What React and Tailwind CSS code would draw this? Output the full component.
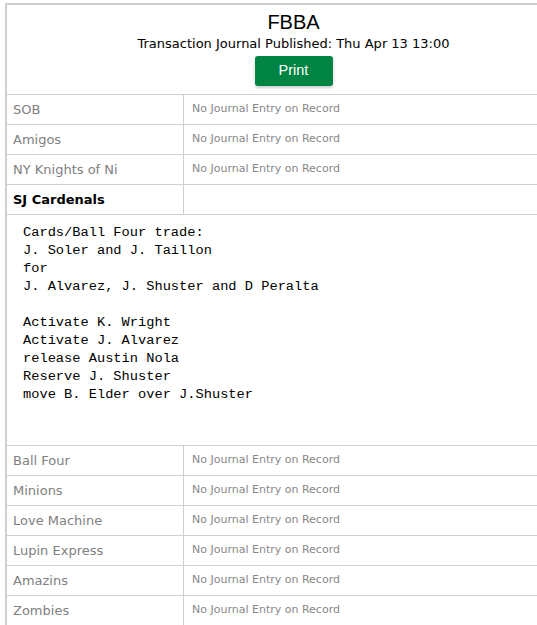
import React from "react";

const before = ["SOB", "Amigos", "NY Knights of Ni"];
const after = ["Ball Four", "Minions", "Love Machine", "Lupin Express", "Amazins", "Zombies"];

const journal = `Cards/Ball Four trade:
J. Soler and J. Taillon
for
J. Alvarez, J. Shuster and D Peralta

Activate K. Wright
Activate J. Alvarez
release Austin Nola
Reserve J. Shuster
move B. Elder over J.Shuster`;

const tah = { fontFamily: '"DejaVu Sans", Verdana, sans-serif' };

function Row({ name }) {
  return (
    <div className="flex h-[30px] border-b border-[#cfcfcf]">
      <div className="w-[177px] shrink-0 border-r border-[#cfcfcf] pl-[6px] flex items-center text-[13px] text-[#808080]" style={tah}>
        {name}
      </div>
      <div className="flex-1 pl-[8px] flex items-center text-[11px] text-[#888888]" style={tah}>
        No Journal Entry on Record
      </div>
    </div>
  );
}

export default function App() {
  return (
    <div className="w-[537px] h-[625px] overflow-hidden bg-white">
      <div className="ml-[5px] mt-[3px] w-[575px] border-l-2 border-t-2 border-[#cfcfcf]">
        <div className="h-[90px] border-b border-[#cfcfcf] flex flex-col items-center">
          <div className="mt-[4px] text-[20px] leading-[26px] text-black" style={{ fontFamily: '"Liberation Sans", Arial, sans-serif' }}>
            FBBA
          </div>
          <div className="mt-[1px] text-[13px] leading-[16px] text-black" style={tah}>
            Transaction Journal Published: Thu Apr 13 13:00
          </div>
          <button
            className="mt-[4px] w-[78px] h-[30px] rounded-[3px] bg-[#008443] text-white text-[14.5px] shadow-[0_2px_3px_rgba(0,0,0,0.2)]"
            style={{ fontFamily: '"Liberation Sans", Arial, sans-serif' }}
          >
            Print
          </button>
        </div>
        {before.map((n) => (
          <Row key={n} name={n} />
        ))}
        <div className="flex h-[30px] border-b border-[#cfcfcf]">
          <div className="w-[177px] shrink-0 border-r border-[#cfcfcf] pl-[6px] flex items-center text-[13px] font-bold text-black" style={tah}>
            SJ Cardenals
          </div>
          <div className="flex-1" />
        </div>
        <div className="h-[231px] border-b border-[#cfcfcf] pl-[16px] pt-[9px]">
          <pre className="text-[13.7px] leading-[18px] text-black m-0" style={{ fontFamily: '"Liberation Mono", "DejaVu Sans Mono", monospace' }}>
            {journal}
          </pre>
        </div>
        {after.map((n) => (
          <Row key={n} name={n} />
        ))}
      </div>
    </div>
  );
}
